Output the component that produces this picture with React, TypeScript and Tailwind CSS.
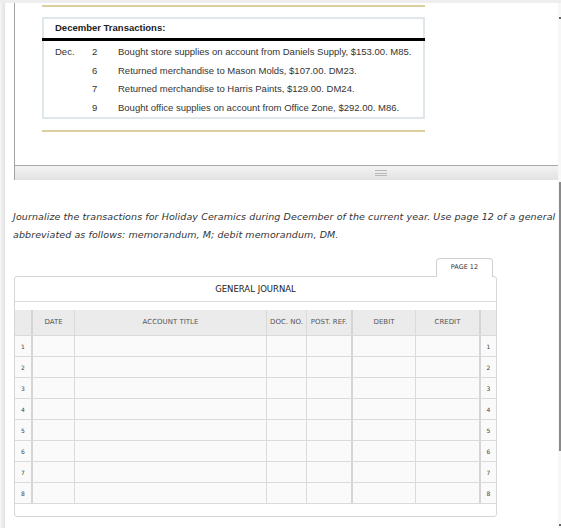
import React from 'react';

const transactions = [
  { month: 'Dec.', day: '2', text: 'Bought store supplies on account from Daniels Supply, $153.00. M85.' },
  { month: '', day: '6', text: 'Returned merchandise to Mason Molds, $107.00. DM23.' },
  { month: '', day: '7', text: 'Returned merchandise to Harris Paints, $129.00. DM24.' },
  { month: '', day: '9', text: 'Bought office supplies on account from Office Zone, $292.00. M86.' },
];

const headers = ['', 'DATE', 'ACCOUNT TITLE', 'DOC. NO.', 'POST. REF.', 'DEBIT', 'CREDIT', ''];

// border of each journal column, the 2px ones are the heavier rules
const colBorder = [
  'border-r-2 border-[#d5d5d5]',
  'border-r border-[#dadada]',
  'border-r border-[#dadada]',
  'border-r border-[#dadada]',
  'border-r-2 border-[#d5d5d5]',
  'border-r border-[#dadada]',
  'border-r-2 border-[#d5d5d5]',
  '',
];

const gridCols = 'grid grid-cols-[18px_42px_192px_40px_46px_63px_65px_15px]';

const TransactionsPanel = () => (
  <div className="w-[383px]">
    <div className="h-[2px] bg-[#dccf9f]" />
    <div className="mt-[10px] border-2 border-[#dfe7ea] text-[#333] font-['Liberation_Sans',sans-serif] text-[9.5px]">
      <div className="h-[19px] pl-[11px] flex items-center font-bold text-[#222]">December Transactions:</div>
      <div className="-mx-[2px] h-[3px] bg-black" />
      <div className="pt-[2px]">
        {transactions.map((t) => (
          <div key={t.day} className="flex h-[18.5px] items-center pl-[11px]">
            <span className="w-[37px] shrink-0">{t.month}</span>
            <span className="w-[26px] shrink-0">{t.day}</span>
            <span className="whitespace-nowrap">{t.text}</span>
          </div>
        ))}
      </div>
    </div>
    <div className="mt-[11px] h-[2px] bg-[#dccf9f]" />
  </div>
);

const GeneralJournal = () => (
  <div className="w-[483px] font-['DejaVu_Sans',sans-serif]">
    <div className="flex justify-end pr-[4px]">
      <div className="relative z-10 -mb-px flex h-[19px] w-[57px] items-center justify-center rounded-t-[4px] border border-b-0 border-[#d0d0d0] bg-white text-[6.5px] text-[#333]">
        PAGE 12
      </div>
    </div>
    <div className="rounded-[3px] border border-[#d6d6d6] bg-white">
      <div className="flex h-[25px] items-center justify-center border-b border-[#dcdcdc] text-[8.5px] text-[#222]">
        GENERAL JOURNAL
      </div>
      <div className="h-[8px]" />
      <div className={`${gridCols} h-[26px] border-b border-[#dadada] bg-[#ebebeb]`}>
        {headers.map((h, i) => (
          <div key={i} className={`flex items-center justify-center text-[7px] text-[#555] whitespace-nowrap ${colBorder[i]}`}>
            {h}
          </div>
        ))}
      </div>
      {[1, 2, 3, 4, 5, 6, 7, 8].map((n) => (
        <div key={n} className={`${gridCols} h-[21px] border-b border-[#dadada] bg-[#fafafa]`}>
          {headers.map((_, i) => (
            <div key={i} className={`flex items-center justify-center text-[6px] text-[#444] ${colBorder[i]}`}>
              {i === 0 || i === 7 ? n : ''}
            </div>
          ))}
        </div>
      ))}
      <div className="h-[12px]" />
    </div>
  </div>
);

export default function App() {
  return (
    <div className="relative h-[528px] w-[561px] overflow-hidden bg-white">
      <div className="h-[3px] bg-[#eeeeee]" />
      <div className="flex h-[525px]">
        <div className="w-[5px] shrink-0 bg-gradient-to-r from-[#f6f6f6] to-[#e2e2e2]" />
        <div className="w-[760px] shrink-0">
          <div className="ml-[9px] w-[733px] border-l border-[#a3a3a3]">
            <div className="h-[162px] pl-[27px] pt-[2px]">
              <TransactionsPanel />
            </div>
            <div className="flex h-[15px] flex-col items-center justify-center gap-[1.5px] border-t border-[#a8a8a8] bg-gradient-to-b from-[#f3f3f3] to-[#e2e2e2]">
              <div className="h-px w-[12px] bg-[#b8b8b8]" />
              <div className="h-px w-[12px] bg-[#b8b8b8]" />
              <div className="h-px w-[12px] bg-[#b8b8b8]" />
            </div>
          </div>

          <p className="mt-[28px] pl-[8px] whitespace-nowrap font-['DejaVu_Sans',sans-serif] text-[9.5px] italic leading-[17.5px] tracking-[0.09px] text-[#333]">
            Journalize the transactions for Holiday Ceramics during December of the current year. Use page 12 of a general
            <br />
            abbreviated as follows: memorandum, M; debit memorandum, DM.
          </p>

          <div className="mt-[15px] ml-[9px]">
            <GeneralJournal />
          </div>
        </div>
      </div>

      {/* page scrollbar bits on the right edge */}
      <div className="absolute right-0 top-[3px] bottom-0 w-[3px] bg-[#f7f7f7]" />
      <div className="absolute right-0 top-[182px] h-[269px] w-[2px] bg-[#8a8a8a]" />
      <div className="absolute right-0 top-[17px] h-[2px] w-[2px] bg-[#666]" />
      <div className="absolute right-0 top-[524px] h-[2px] w-[2px] bg-[#666]" />
    </div>
  );
}
